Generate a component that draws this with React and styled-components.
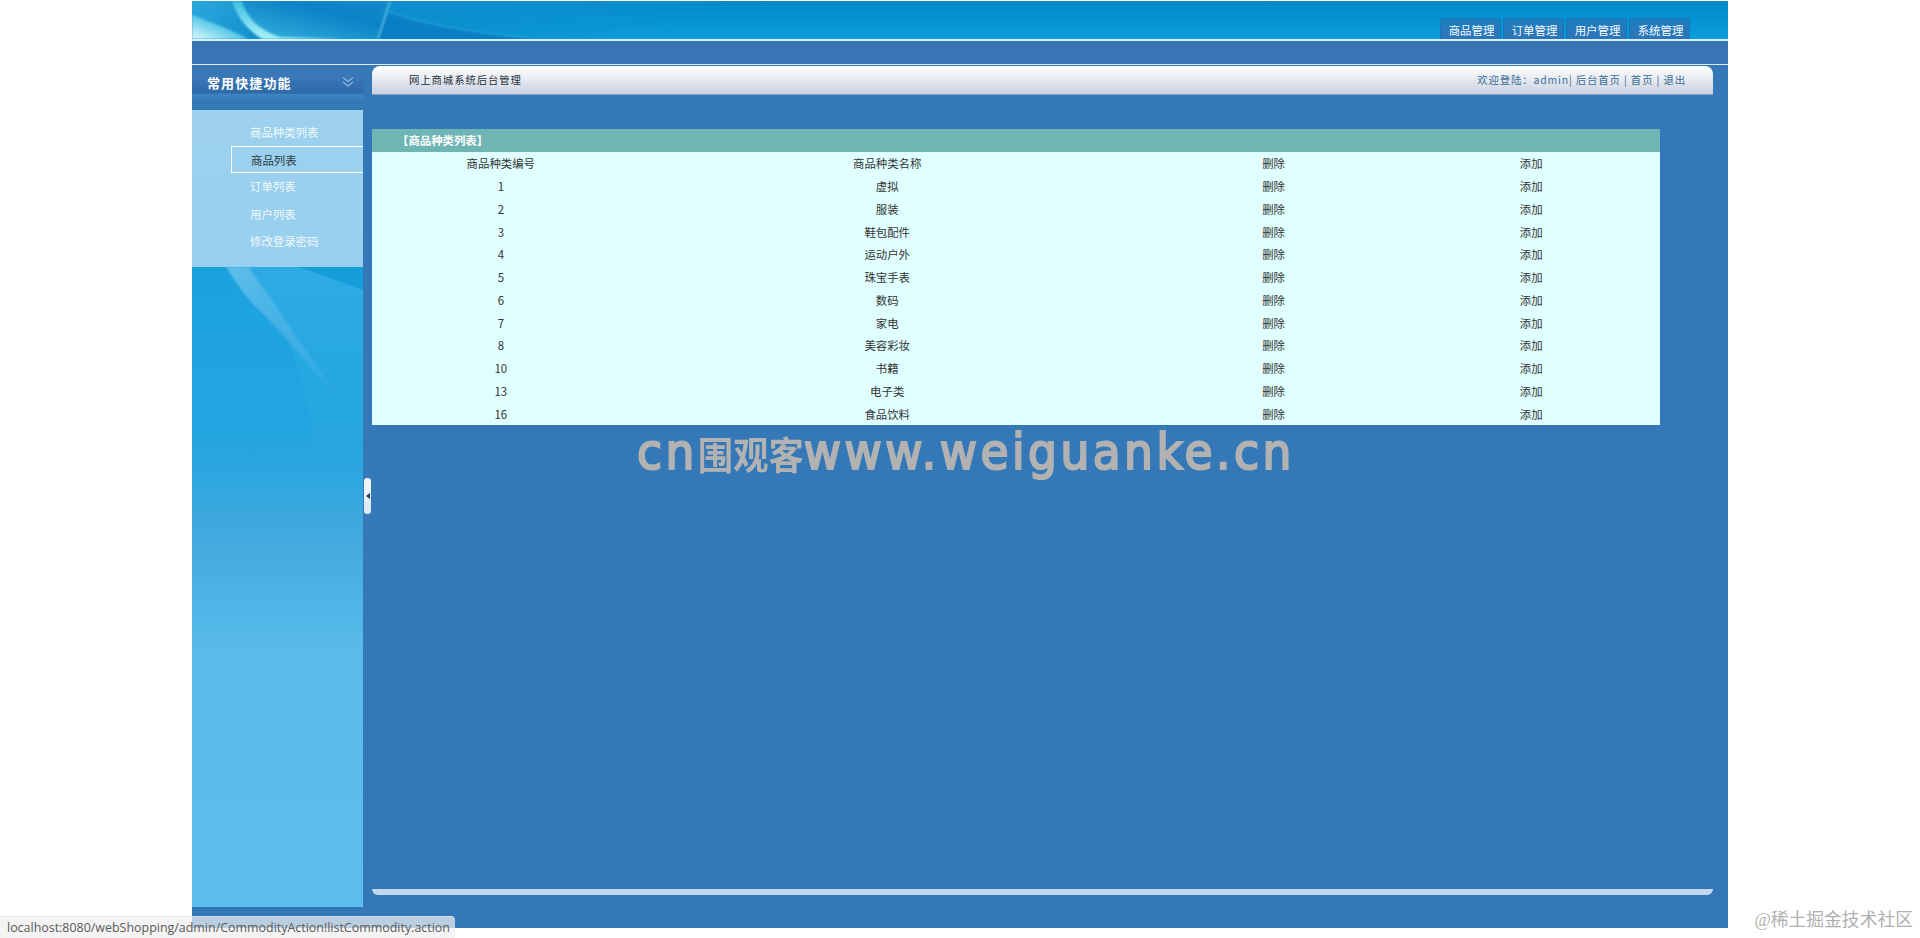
import React from "react";
import styled, { createGlobalStyle } from "styled-components";

const GlobalStyle = createGlobalStyle`
    html, body {
        margin: 0;
        padding: 0;
        background: #fff;
        height: 938px;
        overflow: hidden;
        font-family: "Noto Sans CJK SC", "Liberation Sans", sans-serif;
    }
`;

const Page = styled.div`
    position: relative;
    width: 1920px;
    height: 938px;
    padding: 1px 192px 0;
    box-sizing: border-box;
    overflow: hidden;
`;

const Frame = styled.div`
    width: 1536px;
    height: 927px;
    background: #3478b8;
    display: flex;
    flex-direction: column;
`;

const Banner = styled.div`
    height: 38px;
    flex: none;
    display: flex;
    justify-content: space-between;
    align-items: flex-end;
    padding-right: 38px;
    background: linear-gradient(180deg, #0288c8 0%, #0a9edd 100%);
    border-bottom: 2px solid #d4f0fb;
`;

const BannerArt = styled.svg`
    display: block;
    width: 540px;
    height: 38px;
    flex: none;
`;

const Tabs = styled.div`
    display: flex;
    gap: 2px;
`;

const Tab = styled.div`
    width: 61px;
    height: 21px;
    border: 1px solid #1477b6;
    border-bottom: none;
    border-radius: 3px 3px 0 0;
    box-sizing: border-box;
    padding: 1px 0 0 2px;
    background: linear-gradient(180deg, #1d7fc0 0%, #2f74b7 100%);
    color: #f6fbff;
    font-size: 11.4px;
    line-height: 20px;
    text-align: center;
`;

const SubBar = styled.div`
    height: 23px;
    flex: none;
    background: #3775b4;
    border-bottom: 1px solid #d8ecf8;
`;

const Body = styled.div`
    flex: 1;
    display: flex;
    gap: 9px;
    min-height: 0;
`;

const Sidebar = styled.div`
    width: 171px;
    flex: none;
    display: flex;
    flex-direction: column;
    margin-bottom: 21px;
`;

const SideTitle = styled.div`
    height: 45px;
    flex: none;
    display: flex;
    align-items: center;
    justify-content: space-between;
    box-sizing: border-box;
    padding: 0 9px 11px 15px;
    background: linear-gradient(180deg, #3775b4 0%, #3a78b8 25%, #2f6aa8 62%, #3f85c2 66%, #3478b8 80%);
    color: #fff;
    font-size: 13px;
    font-weight: 700;
    letter-spacing: 1.1px;
`;

const Menu = styled.div`
    height: 157px;
    flex: none;
    box-sizing: border-box;
    padding-top: 9px;
    background: linear-gradient(180deg, #9dd1ee 0%, #97cfee 100%);
    display: flex;
    flex-direction: column;
    align-items: flex-end;
`;

const MenuItem = styled.div`
    width: 132px;
    height: 27.2px;
    box-sizing: border-box;
    padding-left: 19px;
    font-size: 11.4px;
    line-height: 26px;
    color: ${({ $active }) => ($active ? "#2b3a46" : "#f2f9fd")};
    ${({ $active }) => $active && `
        border: 1px solid #fff;
        border-right: none;
    `}
`;

const SidePanel = styled.div`
    flex: 1;
    background: linear-gradient(180deg, #1aa2df 0%, #26a5e0 29%, #42a9de 42%, #58bbeb 60%, #5cbeec 100%);
`;

const Swoosh = styled.svg`
    display: block;
    width: 171px;
    height: 210px;
`;

const Main = styled.div`
    flex: 1;
    display: flex;
    flex-direction: column;
    padding: 1px 15px 0 0;
    min-width: 0;
`;

const TopBar = styled.div`
    height: 29px;
    flex: none;
    display: flex;
    justify-content: space-between;
    align-items: center;
    box-sizing: border-box;
    padding: 0 27px 1px 37px;
    border-radius: 8px 8px 0 0;
    border-bottom: 1px solid #8ca4bf;
    background: linear-gradient(180deg, #ffffff 0%, #e8ebf1 45%, #c8d2e1 100%);
    font-size: 10.4px;
`;

const Crumb = styled.div`
    color: #26303a;
    letter-spacing: 0.9px;
`;

const UserLinks = styled.div`
    color: #3a6d96;
    letter-spacing: 0.87px;
    white-space: pre;
`;

const Table = styled.div`
    width: 1288px;
    margin-top: 34px;
    flex: none;
`;

const TableTitle = styled.div`
    height: 23px;
    background: #6eb5b4;
    color: #fff;
    font-size: 11.4px;
    font-weight: 700;
    line-height: 23px;
    padding-left: 25px;
`;

const Rows = styled.div`
    height: 273px;
    display: grid;
    grid-template-columns: 1fr 2fr 1fr 1fr;
    grid-auto-rows: 1fr;
    background: #e0ffff;
`;

const Cell = styled.div`
    display: flex;
    align-items: center;
    justify-content: center;
    color: #333;
    font-size: 11.4px;
`;

const BottomBar = styled.div`
    height: 6px;
    margin-top: auto;
    margin-bottom: 33px;
    flex: none;
    background: #c3d8ee;
    border-radius: 0 0 6px 6px;
`;

const Handle = styled.div`
    position: absolute;
    left: 364px;
    top: 478px;
    width: 7px;
    height: 36px;
    border-radius: 3px;
    background: linear-gradient(180deg, #f4f8fd 0%, #dce8f6 100%);
    display: flex;
    align-items: center;
    justify-content: center;
    &::before {
        content: "";
        border-style: solid;
        border-width: 3.5px 4px 3.5px 0;
        border-color: transparent #1c3a63 transparent transparent;
    }
`;

const Watermark = styled.div`
    position: absolute;
    left: 637px;
    top: 422px;
    color: #b2b2b2;
    font-family: "DejaVu Sans", "Noto Sans CJK SC", sans-serif;
    font-size: 49px;
    line-height: 62px;
    letter-spacing: 3.7px;
    white-space: nowrap;
    -webkit-text-stroke: 2.2px #b2b2b2;
    transform: scaleX(0.93);
    transform-origin: left center;
`;

const WatermarkCjk = styled.span`
    font-family: "Noto Sans CJK SC", sans-serif;
    font-size: 38px;
    font-weight: 700;
    letter-spacing: 0;
    -webkit-text-stroke: 0;
`;

const StatusBubble = styled.div`
    position: absolute;
    left: 0;
    bottom: 0;
    width: 455px;
    height: 22px;
    box-sizing: border-box;
    padding-left: 7px;
    border-radius: 0 4px 0 0;
    border-top: 1px solid rgba(225, 225, 225, 0.7);
    background: rgba(240, 240, 240, 0.72);
    color: #5a5a5a;
    font-family: "Open Sans", "Liberation Sans", sans-serif;
    font-size: 12.45px;
    line-height: 21px;
    white-space: nowrap;
`;

const Credit = styled.div`
    position: absolute;
    right: 7px;
    bottom: 7px;
    color: #b0b0b0;
    font-family: "Liberation Serif", "Noto Sans CJK SC", serif;
    font-size: 17.8px;
    line-height: 22px;
`;

const tabs = ["商品管理", "订单管理", "用户管理", "系统管理"];
const menu = ["商品种类列表", "商品列表", "订单列表", "用户列表", "修改登录密码"];
const categories = [
    ["1", "虚拟"],
    ["2", "服装"],
    ["3", "鞋包配件"],
    ["4", "运动户外"],
    ["5", "珠宝手表"],
    ["6", "数码"],
    ["7", "家电"],
    ["8", "美容彩妆"],
    ["10", "书籍"],
    ["13", "电子类"],
    ["16", "食品饮料"],
];

const App = () => (
    <Page>
        <GlobalStyle />
        <Frame>
            <Banner>
                <BannerArt viewBox="0 0 540 38">
                    <defs>
                        <linearGradient id="artLeft" x1="0" y1="0" x2="1" y2="0.2">
                            <stop offset="0" stopColor="#2aa9dc" />
                            <stop offset="1" stopColor="#148fce" />
                        </linearGradient>
                        <linearGradient id="artMiddle" x1="0" y1="1" x2="1" y2="0">
                            <stop offset="0" stopColor="#38b4e0" />
                            <stop offset="0.65" stopColor="#0b82c6" />
                            <stop offset="1" stopColor="#0f8ccb" />
                        </linearGradient>
                        <linearGradient id="artRight" x1="0" y1="0" x2="1" y2="0">
                            <stop offset="0" stopColor="#0e8ecc" />
                            <stop offset="1" stopColor="#0b95d5" stopOpacity="0" />
                        </linearGradient>
                        <linearGradient id="artArc" x1="0" y1="0" x2="0" y2="1">
                            <stop offset="0" stopColor="#3fbde2" />
                            <stop offset="1" stopColor="#a8f4f6" />
                        </linearGradient>
                        <linearGradient id="artGlow" x1="0" y1="1" x2="1" y2="0">
                            <stop offset="0" stopColor="#e4fbfb" />
                            <stop offset="0.55" stopColor="#4cc4e6" />
                            <stop offset="1" stopColor="#2aa9dc" stopOpacity="0" />
                        </linearGradient>
                        <filter id="artSoft">
                            <feGaussianBlur stdDeviation="1" />
                        </filter>
                    </defs>
                    <rect x="190" width="350" height="38" fill="url(#artRight)" />
                    <path d="M0 0H44C50 16 60 30 74 38H0Z" fill="url(#artLeft)" />
                    <path d="M44 0H198L186 38H74C60 30 50 16 44 0Z" fill="url(#artMiddle)" />
                    <path d="M196 11C240 26 290 33 345 38H186Z" fill="#0a7fc5" />
                    <path d="M0 14C16 20 38 28 56 38H0Z" fill="url(#artGlow)" filter="url(#artSoft)" />
                    <path d="M40 0H50C54 14 64 28 88 36L150 38H70C54 28 44 14 40 0Z" fill="url(#artArc)" filter="url(#artSoft)" />
                    <path d="M198 0L186 38" stroke="#52b6dc" strokeWidth="2" filter="url(#artSoft)" />
                    <path d="M196 11C240 26 290 33 345 38" stroke="#2ba5da" strokeWidth="1.2" fill="none" filter="url(#artSoft)" />
                </BannerArt>
                <Tabs>
                    {tabs.map((tab) => (
                        <Tab key={tab}>{tab}</Tab>
                    ))}
                </Tabs>
            </Banner>
            <SubBar />
            <Body>
                <Sidebar>
                    <SideTitle>
                        常用快捷功能
                        <svg width="12" height="12" viewBox="0 0 12 12" fill="none" stroke="#8fb8dc" strokeWidth="1.2">
                            <path d="M1 1.5L6 5.5L11 1.5" />
                            <path d="M1 6L6 10L11 6" />
                        </svg>
                    </SideTitle>
                    <Menu>
                        {menu.map((item) => (
                            <MenuItem key={item} $active={item === "商品列表"}>
                                {item}
                            </MenuItem>
                        ))}
                    </Menu>
                    <SidePanel>
                        <Swoosh viewBox="0 0 171 210">
                            <defs>
                                <linearGradient id="rightFade" x1="0" y1="0" x2="0" y2="1">
                                    <stop offset="0" stopColor="#2eabe5" />
                                    <stop offset="1" stopColor="#2eabe5" stopOpacity="0" />
                                </linearGradient>
                                <linearGradient id="streakFade" x1="0" y1="0" x2="1" y2="1">
                                    <stop offset="0" stopColor="#62bfec" />
                                    <stop offset="1" stopColor="#4cb2e6" stopOpacity="0.2" />
                                </linearGradient>
                                <filter id="streakSoft">
                                    <feGaussianBlur stdDeviation="0.8" />
                                </filter>
                            </defs>
                            <path d="M57 0H171V210H120C125 150 100 60 57 0Z" fill="url(#rightFade)" />
                            <path d="M107 0H171V23Z" fill="#169edb" />
                            <path d="M34 0H57L147 132C120 100 85 60 60 36C50 25 42 12 34 0Z" fill="url(#streakFade)" filter="url(#streakSoft)" />
                        </Swoosh>
                    </SidePanel>
                </Sidebar>
                <Main>
                    <TopBar>
                        <Crumb>网上商城系统后台管理</Crumb>
                        <UserLinks>欢迎登陆：admin| 后台首页 | 首页 | 退出</UserLinks>
                    </TopBar>
                    <Table>
                        <TableTitle>【商品种类列表】</TableTitle>
                        <Rows>
                            <Cell>商品种类编号</Cell>
                            <Cell>商品种类名称</Cell>
                            <Cell>删除</Cell>
                            <Cell>添加</Cell>
                            {categories.map(([id, name]) => (
                                <React.Fragment key={id}>
                                    <Cell>{id}</Cell>
                                    <Cell>{name}</Cell>
                                    <Cell>删除</Cell>
                                    <Cell>添加</Cell>
                                </React.Fragment>
                            ))}
                        </Rows>
                    </Table>
                    <BottomBar />
                </Main>
            </Body>
        </Frame>
        <Handle />
        <Watermark>
            cn<WatermarkCjk>围观客</WatermarkCjk>www.weiguanke.cn
        </Watermark>
        <StatusBubble>localhost:8080/webShopping/admin/CommodityAction!listCommodity.action</StatusBubble>
        <Credit>@稀土掘金技术社区</Credit>
    </Page>
);

export default App;
